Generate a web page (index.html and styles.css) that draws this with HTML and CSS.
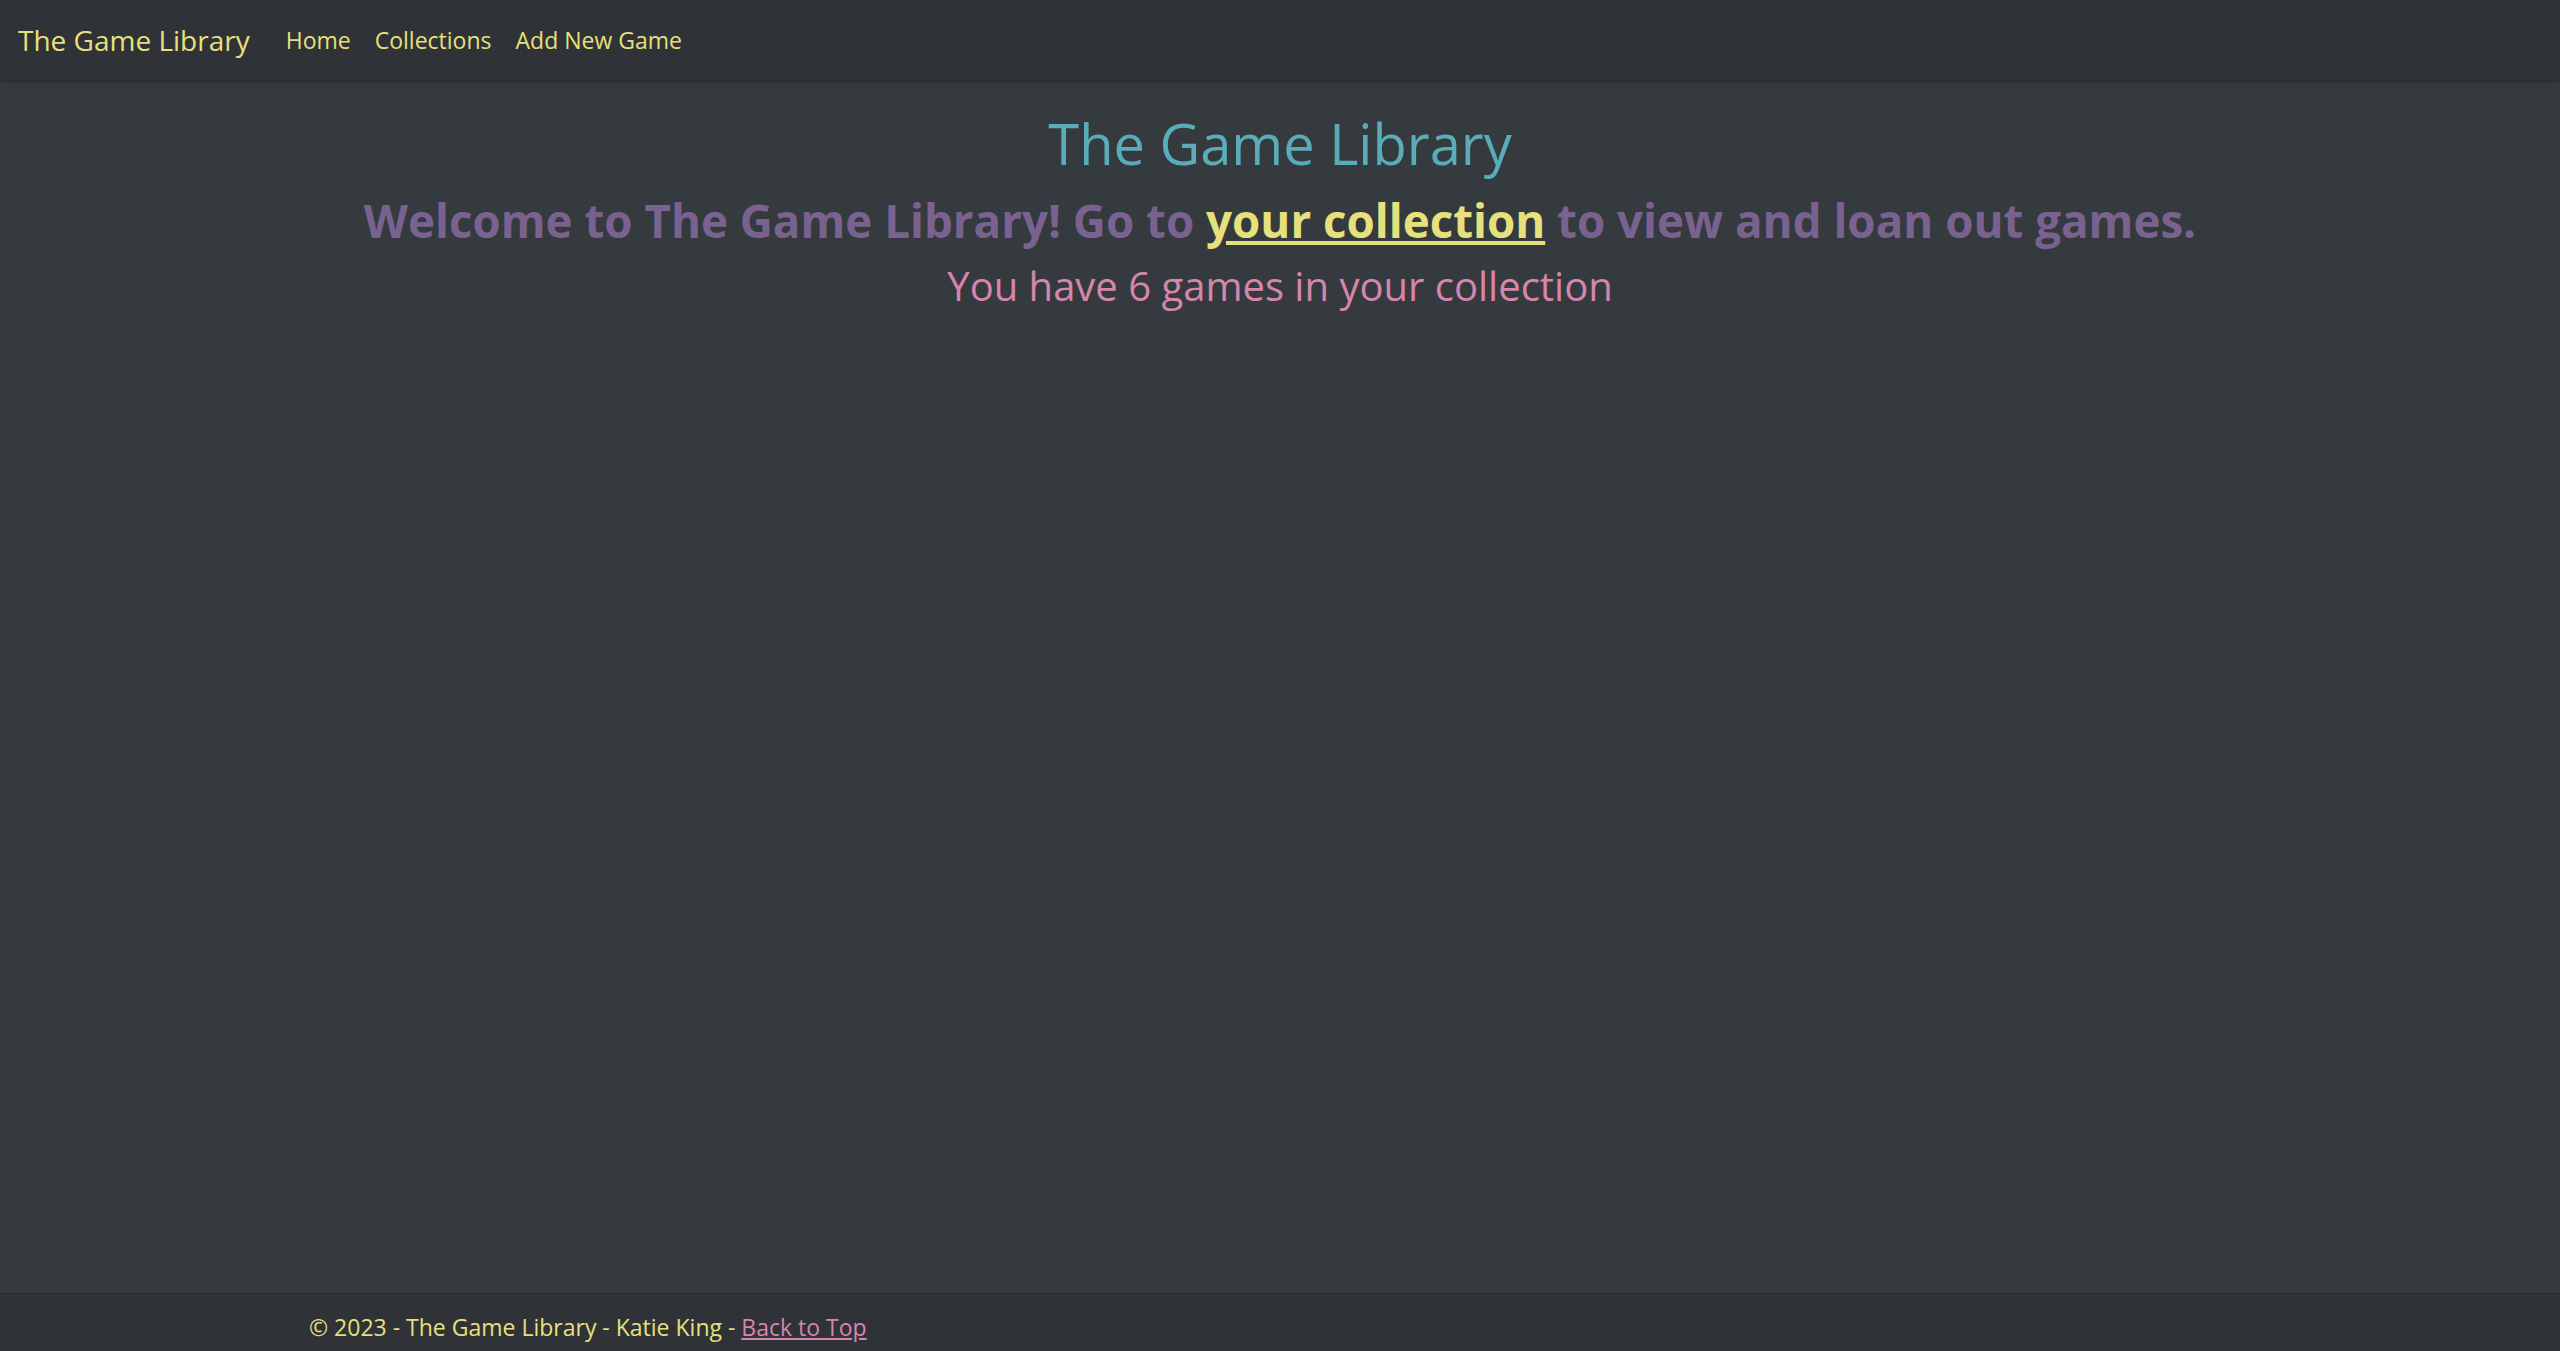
FILE: index.html
```html
<!DOCTYPE html>
<html lang="en">
<head>
<meta charset="utf-8">
<title>The Game Library</title>
<link rel="stylesheet" href="styles.css">
</head>
<body>
<div class="page">
  <header class="navbar">
    <a class="brand" href="#">The Game Library</a>
    <nav class="nav">
      <a class="nav-link" href="#">Home</a>
      <a class="nav-link" href="#">Collections</a>
      <a class="nav-link" href="#">Add New Game</a>
    </nav>
  </header>
  <main class="main">
    <h1 class="title">The Game Library</h1>
    <h2 class="welcome">Welcome to The Game Library! Go to <a class="collection-link" href="#">your collection</a> to view and loan out games.</h2>
    <h3 class="count">You have 6 games in your collection</h3>
  </main>
  <footer class="footer">
    <div class="footer-inner">© 2023 - The Game Library - Katie King - <a class="top-link" href="#">Back to Top</a></div>
  </footer>
</div>
</body>
</html>
```
FILE: styles.css
```css
* { box-sizing: border-box; }
html, body { margin: 0; padding: 0; height: 100%; }
body {
  background: #353a3e;
  font-family: "Open Sans", "Noto Sans", sans-serif;
  font-size: 24px;
  color: #e6e07d;
}
.page {
  min-height: 100vh;
  display: flex;
  flex-direction: column;
}
.navbar {
  height: 81px;
  background: #2f3236;
  display: flex;
  align-items: center;
  padding: 0 18px;
  box-shadow: 0 2px 4px rgba(0,0,0,0.12);
  border-bottom: 1px solid #2b2e31;
}
.brand {
  color: #e6e07d;
  text-decoration: none;
  font-size: 28px;
  margin-right: 36px;
}
.nav { display: flex; gap: 24px; }
.nav-link {
  color: #e6e07d;
  text-decoration: none;
  font-size: 23px;
}
.main {
  flex: 1;
  text-align: center;
  padding-top: 29px;
}
.title {
  margin: 0;
  font-size: 56px;
  font-weight: 400;
  color: #5aacb8;
  line-height: 1.2;
}
.welcome {
  margin: 0;
  font-size: 45.7px;
  font-weight: 700;
  color: #7a6290;
  line-height: 1.2;
  margin-top: 16px;
}
.collection-link { color: #e6e07d; text-decoration: underline; }
.count {
  margin: 0;
  font-size: 40px;
  font-weight: 400;
  color: #d685ad;
  line-height: 1.2;
  margin-top: 14px;
}
.footer {
  background: #2f3236;
  height: 58px;
  border-top: 1px solid #2c2f32;
}
.footer-inner {
  padding-left: 309px;
  padding-top: 17px;
  font-size: 23px;
}
.top-link { color: #d685ad; text-decoration: underline; }
```
